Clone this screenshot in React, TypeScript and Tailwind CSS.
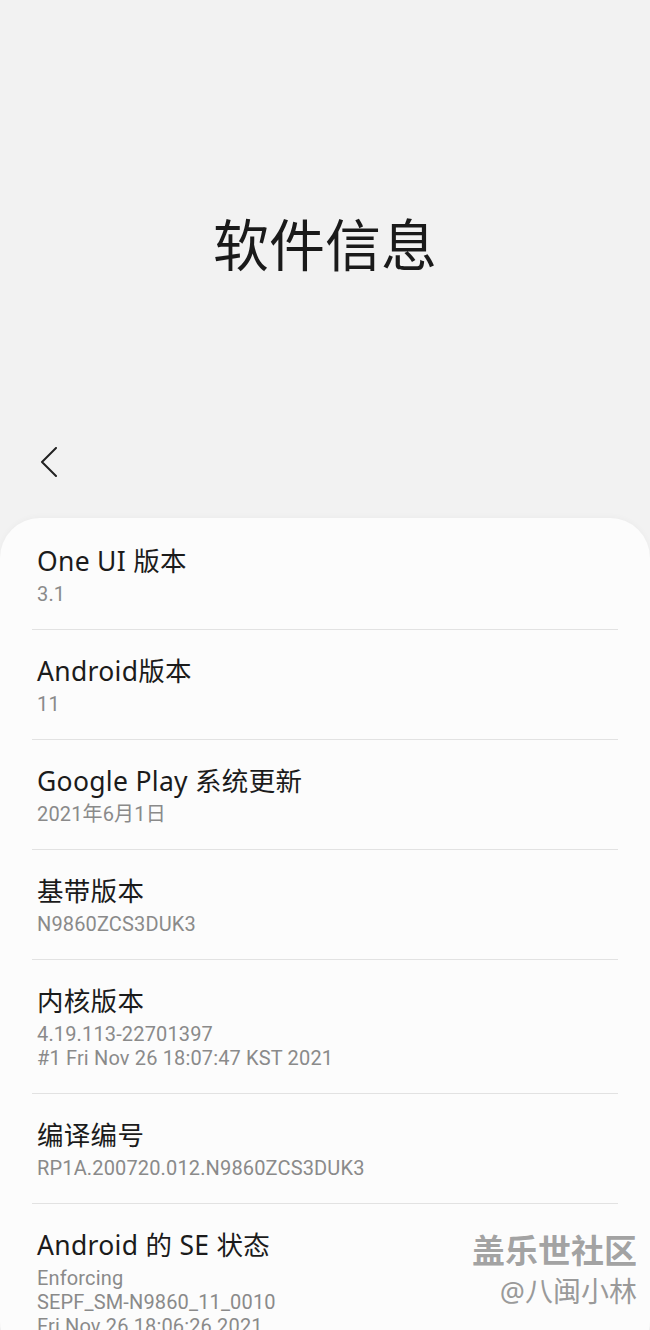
import React from "react";

const rows: { title: string; subs: string[] }[] = [
  { title: "One UI 版本", subs: ["3.1"] },
  { title: "Android版本", subs: ["11"] },
  { title: "Google Play 系统更新", subs: ["2021年6月1日"] },
  { title: "基带版本", subs: ["N9860ZCS3DUK3"] },
  { title: "内核版本", subs: ["4.19.113-22701397", "#1 Fri Nov 26 18:07:47 KST 2021"] },
  { title: "编译编号", subs: ["RP1A.200720.012.N9860ZCS3DUK3"] },
  { title: "Android 的 SE 状态", subs: ["Enforcing", "SEPF_SM-N9860_11_0010", "Fri Nov 26 18:06:26 2021"] },
];

const font = { fontFamily: '"Noto Sans", "Noto Sans CJK SC", sans-serif' };
const subFont = { fontFamily: '"Roboto", "Noto Sans CJK SC", sans-serif' };

export default function App() {
  return (
    <div className="relative h-[1330px] w-[650px] overflow-hidden bg-[#f2f2f2]" style={font}>
      <div className="flex h-[430px] items-center justify-center pt-[58px]">
        <h1 className="text-[56px] leading-none font-normal text-[#1a1a1a]">软件信息</h1>
      </div>
      <div className="h-[88px] pt-[17px] pl-[38px]">
        <svg width="22" height="30" viewBox="0 0 22 30" fill="none">
          <polyline points="18,1 4,15 18,29" stroke="#222" strokeWidth="2" strokeLinecap="round" strokeLinejoin="round" />
        </svg>
      </div>
      <div className="rounded-[40px] bg-[#fcfcfc] pt-[2px] shadow-[0_-1px_6px_rgba(0,0,0,0.03)]">
        {rows.map((r, i) => (
          <div key={i}>
            {i > 0 && <div className="mx-[32px] h-px bg-[#e2e2e2]" />}
            <div className="pl-[37px] pt-[24px] pb-[23px]">
              <div className="text-[26.5px] leading-[34px] tracking-[0.3px] text-[#1b1b1b]">{r.title}</div>
              <div className="mt-[4px]" style={subFont}>
                {r.subs.map((s, j) => (
                  <div key={j} className="text-[20px] leading-[24px] tracking-[0.15px] text-[#8a8a8a]">
                    {s}
                  </div>
                ))}
              </div>
            </div>
          </div>
        ))}
      </div>
      <div className="absolute right-[13px] top-[1229px] flex flex-col items-end">
        <div className="text-[33px] leading-[44px] font-bold text-[#a3a3a3] [text-shadow:0_0_2px_#ffffff,1px_1px_1px_#ffffff]">
          盖乐世社区
        </div>
        <div className="text-[28px] leading-[36px] text-[#9a9a9a] [text-shadow:0_0_2px_#ffffff]">@八闽小林</div>
      </div>
    </div>
  );
}
